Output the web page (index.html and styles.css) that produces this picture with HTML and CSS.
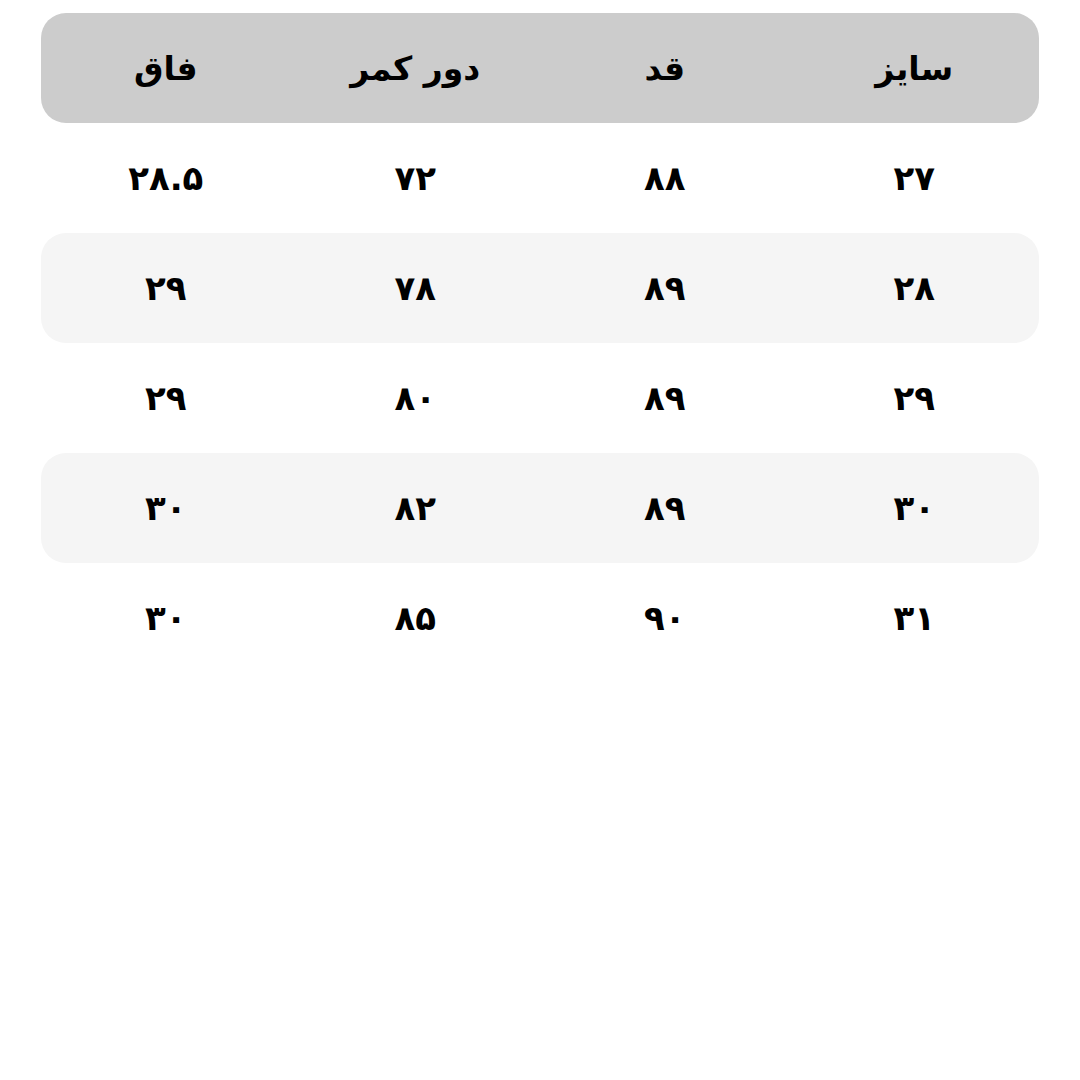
FILE: index.html
```html
<!DOCTYPE html>
<html lang="fa" dir="rtl">
<head>
<meta charset="utf-8">
<link rel="stylesheet" href="styles.css">
</head>
<body>
<div class="table">
  <div class="row head"><div class="cell">سایز</div><div class="cell">قد</div><div class="cell">دور کمر</div><div class="cell">فاق</div></div>
  <div class="row"><div class="cell">۲۷</div><div class="cell">۸۸</div><div class="cell">۷۲</div><div class="cell">۲۸.۵</div></div>
  <div class="row alt"><div class="cell">۲۸</div><div class="cell">۸۹</div><div class="cell">۷۸</div><div class="cell">۲۹</div></div>
  <div class="row"><div class="cell">۲۹</div><div class="cell">۸۹</div><div class="cell">۸۰</div><div class="cell">۲۹</div></div>
  <div class="row alt"><div class="cell">۳۰</div><div class="cell">۸۹</div><div class="cell">۸۲</div><div class="cell">۳۰</div></div>
  <div class="row"><div class="cell">۳۱</div><div class="cell">۹۰</div><div class="cell">۸۵</div><div class="cell">۳۰</div></div>
</div>
</body>
</html>
```

FILE: styles.css
```css
html, body {
  margin: 0;
  padding: 0;
  background: #ffffff;
}
body {
  font-family: "DejaVu Sans", "Noto Sans", sans-serif;
  color: #000000;
}
.table {
  padding: 13px 41px;
  display: flex;
  flex-direction: column;
}
.row {
  display: grid;
  grid-template-columns: repeat(4, 1fr);
  height: 110px;
  align-items: center;
  border-radius: 25px;
}
.row.head {
  background: #cccccc;
}
.row.head .cell {
  font-size: 33px;
}
.row.alt {
  background: #f5f5f5;
}
.cell {
  text-align: center;
  font-size: 34px;
  font-weight: bold;
}
```
